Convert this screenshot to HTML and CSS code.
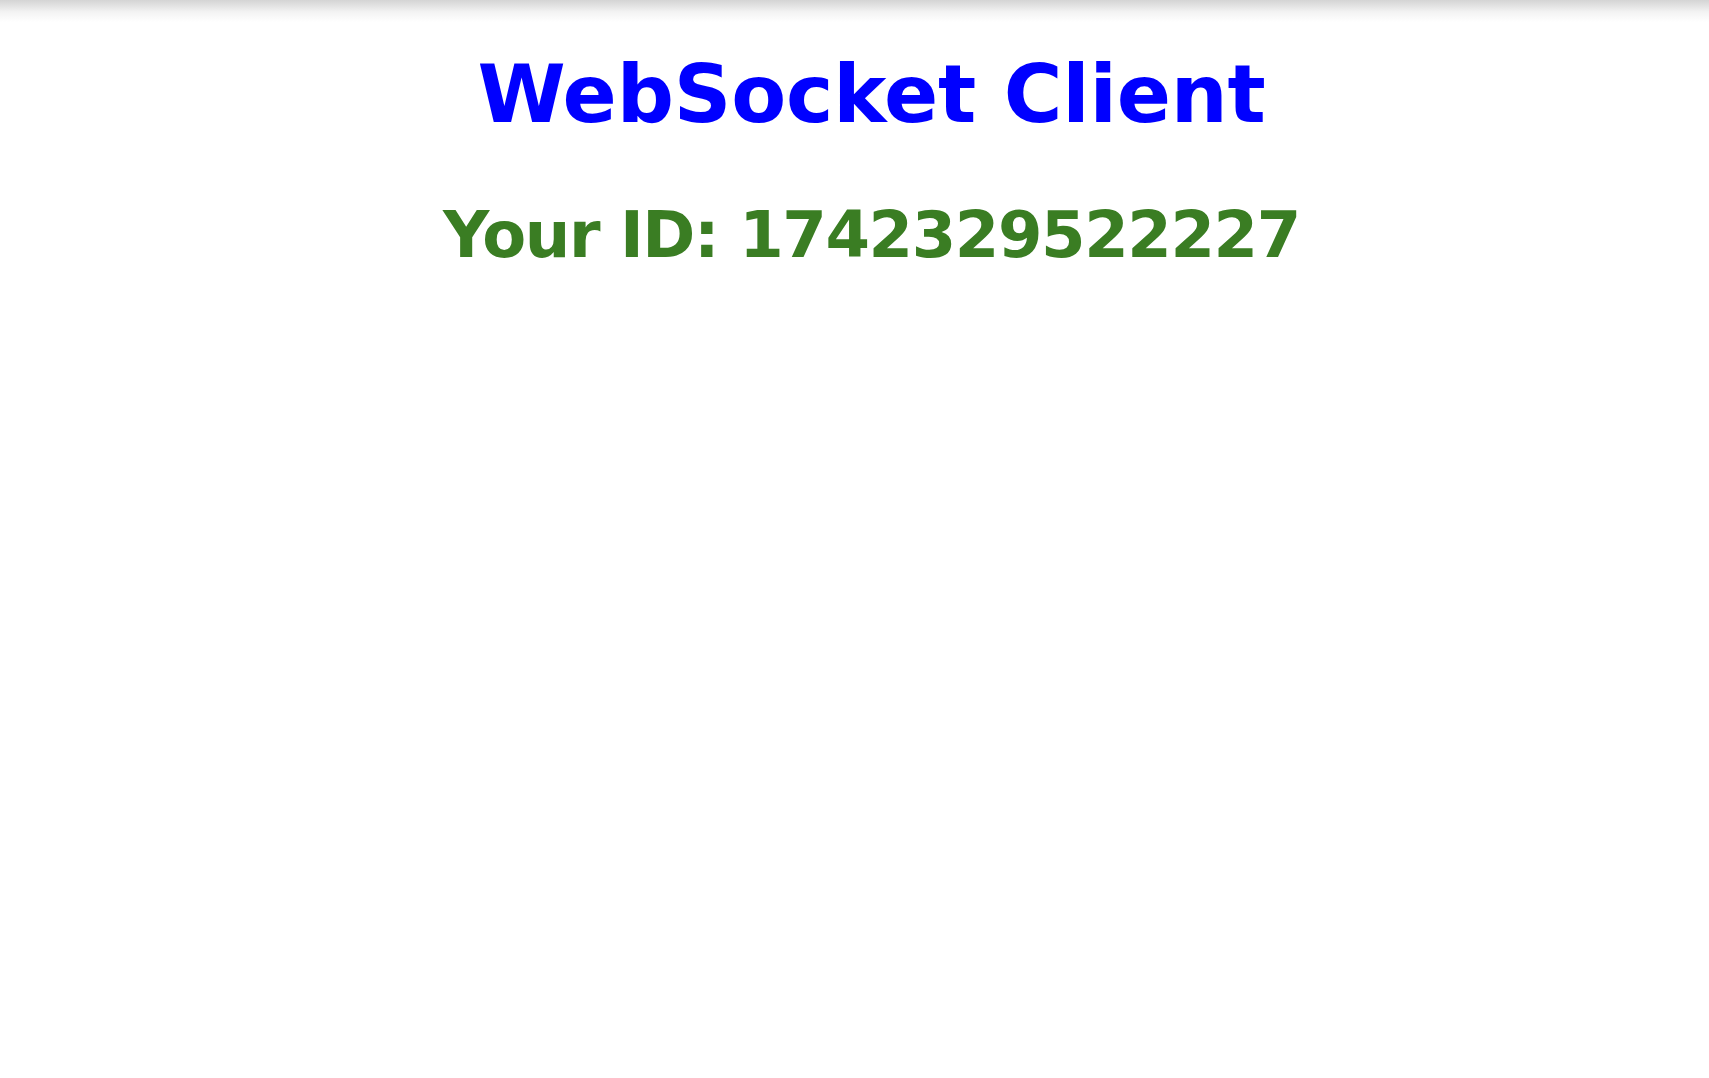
FILE: index.html
```html
<!DOCTYPE html>
<html>
<head>
<meta charset="utf-8">
<title>WebSocket Client</title>
<link rel="stylesheet" href="styles.css">
</head>
<body>
<main class="page">
  <h1 class="title">WebSocket Client</h1>
  <h2 class="your-id">Your ID: 1742329522227</h2>
</main>
</body>
</html>
```
FILE: styles.css
```css
html {
  background: #fff linear-gradient(to bottom, #d4d4d4 0px, #f3f3f3 12px, #ffffff 22px) no-repeat;
  background-size: 100% 22px;
  min-height: 100%;
}
body {
  margin: 0;
  font-family: "DejaVu Sans", Verdana, sans-serif;
}
.page {
  display: flex;
  flex-direction: column;
  align-items: center;
  padding: 45px 0 0 34px;
}
.title {
  margin: 0;
  font-size: 80px;
  line-height: 100px;
  font-weight: bold;
  letter-spacing: -0.2px;
  color: #0000ff;
}
.your-id {
  margin: 50px 0 0;
  font-size: 64px;
  line-height: 80px;
  font-weight: bold;
  letter-spacing: -1.4px;
  color: #3a7d23;
}
```
